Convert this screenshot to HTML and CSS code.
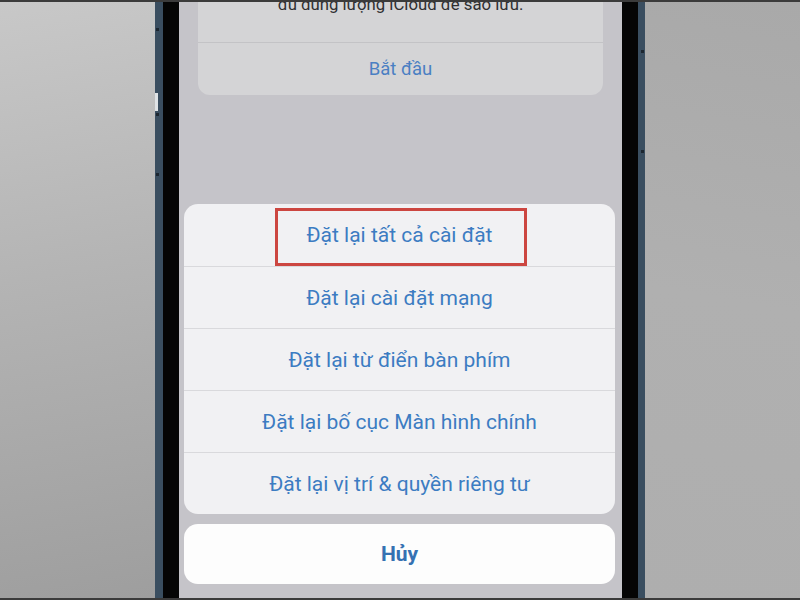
FILE: index.html
```html
<!DOCTYPE html>
<html lang="vi">
<head>
    <meta charset="UTF-8">
    <meta name="viewport" content="width=device-width, initial-scale=1.0">
    <title>Đặt lại</title>
    <link rel="stylesheet" href="styles.css">
</head>
<body>
    <div class="page">
        <div class="side side-left"></div>
        <div class="phone">
            <span class="btn-mark mark-a"></span>
            <span class="btn-mark mark-b"></span>
            <span class="btn-mark mark-c"></span>
            <span class="btn-mark mark-d"></span>
            <span class="btn-mark mark-e"></span>
            <span class="switch-glint"></span>
            <div class="screen">
                <div class="backup-card">
                    <div class="backup-text">đủ dung lượng iCloud để sao lưu.</div>
                    <div class="backup-action">Bắt đầu</div>
                </div>
                <div class="sheet">
                    <div class="sheet-row">Đặt lại tất cả cài đặt
                        <span class="highlight"></span>
                    </div>
                    <div class="sheet-row">Đặt lại cài đặt mạng</div>
                    <div class="sheet-row">Đặt lại từ điển bàn phím</div>
                    <div class="sheet-row">Đặt lại bố cục Màn hình chính</div>
                    <div class="sheet-row">Đặt lại vị trí &amp; quyền riêng tư</div>
                </div>
                <div class="cancel">Hủy</div>
            </div>
        </div>
        <div class="side side-right"></div>
    </div>
</body>
</html>
```

FILE: styles.css
```css
body {
    margin: 0;
    font-family: Roboto, "Liberation Sans", sans-serif;
    background-color: #a8a8a8;
}

.page {
    display: flex;
    width: 800px;
    height: 600px;
    box-sizing: border-box;
    border-top: 2px solid #3b3b3b;
    border-bottom: 2px solid #3b3b3b;
    overflow: hidden;
}

.side {
    width: 155px;
    flex-shrink: 0;
}
.side-left {
    background: linear-gradient(170deg, #c8c8c8 0%, #b4b4b4 45%, #9e9e9e 100%);
}
.side-right {
    background: linear-gradient(190deg, #a9a9a9 0%, #b0b0b0 50%, #aeaeae 100%);
}

.phone {
    position: relative;
    display: flex;
    width: 490px;
    box-sizing: border-box;
    background-color: #050505;
    padding: 0 16px;
    border-left: 8px solid #3a4e60;
    border-right: 7px solid #3a4e60;
}

.btn-mark {
    position: absolute;
    width: 3px;
    height: 3px;
    background-color: #1c2630;
}
.mark-a { left: -7px; top: 26px; }
.mark-b { left: -7px; top: 111px; }
.mark-c { left: -7px; top: 171px; }
.mark-d { right: -6px; top: 48px; }
.mark-e { right: -6px; top: 148px; }
.switch-glint {
    position: absolute;
    left: -8px;
    top: 91px;
    width: 3px;
    height: 18px;
    background-color: #dfe3e6;
}

.screen {
    flex: 1;
    display: flex;
    flex-direction: column;
    background-color: #c5c4c9;
    overflow: hidden;
}

.backup-card {
    margin: -22px 19px 0;
    background-color: #d4d4d6;
    border-radius: 12px;
}
.backup-text {
    height: 63px;
    box-sizing: border-box;
    padding-top: 14px;
    border-bottom: 1px solid #c3c3c6;
    text-align: center;
    font-size: 16.75px;
    line-height: 20px;
    color: #2f2f31;
}
.backup-action {
    height: 52px;
    line-height: 52px;
    text-align: center;
    font-size: 18.5px;
    color: #4a7fc3;
}

.sheet {
    margin: 109px 7px 0 5px;
    background-color: #f1f1f3;
    border-radius: 14px;
}
.sheet-row {
    position: relative;
    height: 62px;
    box-sizing: border-box;
    display: flex;
    justify-content: center;
    align-items: center;
    font-size: 21px;
    color: #3c7cc2;
}
.sheet-row + .sheet-row {
    border-top: 1px solid #d9d9dc;
}

.highlight {
    position: absolute;
    left: 91px;
    top: 4px;
    width: 252px;
    height: 58px;
    box-sizing: border-box;
    border: 3px solid #cc4640;
}

.cancel {
    margin: 10px 7px 0 5px;
    height: 60px;
    display: flex;
    justify-content: center;
    align-items: center;
    background-color: #fdfdfd;
    border-radius: 14px;
    font-size: 21px;
    font-weight: bold;
    color: #3571b2;
}
```
